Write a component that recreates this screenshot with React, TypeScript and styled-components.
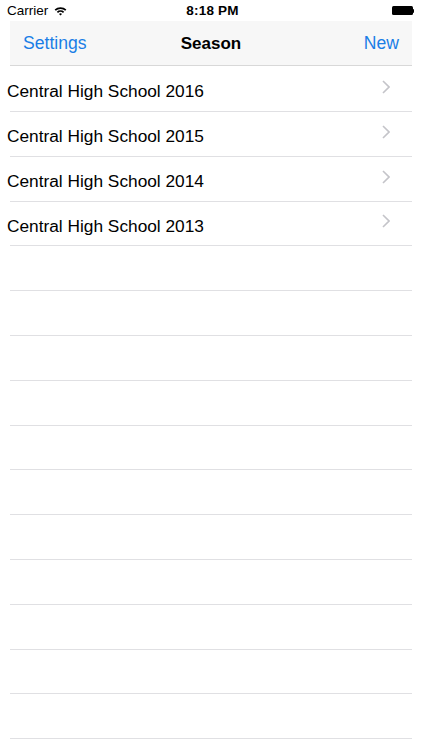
import React from "react";
import styled, { createGlobalStyle } from "styled-components";

const GlobalStyle = createGlobalStyle`
  html, body {
    margin: 0;
    padding: 0;
    background: #ffffff;
  }
  body {
    font-family: "Liberation Sans", Arial, sans-serif;
    -webkit-font-smoothing: antialiased;
  }
`;

const Screen = styled.div`
  width: 422px;
  height: 750px;
  overflow: hidden;
  background: #fff;
  display: flex;
  flex-direction: column;
  & > * {
    flex-shrink: 0;
  }
`;

const StatusBar = styled.div`
  height: 21px;
  display: grid;
  grid-template-columns: 1fr auto 1fr;
  align-items: center;
  padding: 0 8px 0 7px;
  font-size: 13.5px;
  color: #000;
`;

const Carrier = styled.div`
  display: flex;
  align-items: center;
  gap: 6px;
`;

const Clock = styled.div`
  font-weight: 700;
  letter-spacing: 0.2px;
  padding-left: 4px;
`;

const BatteryWrap = styled.div`
  justify-self: end;
  display: flex;
  align-items: center;
`;

const BatteryBody = styled.div`
  width: 21px;
  height: 9px;
  background: #000;
  border-radius: 1.5px;
`;

const BatteryTip = styled.div`
  width: 1.5px;
  height: 4px;
  background: #000;
  border-radius: 0 1px 1px 0;
`;

const NavBar = styled.div`
  margin: 0 10px;
  height: 43px;
  background: #f7f7f7;
  border-bottom: 1px solid #d8d8d8;
  display: grid;
  grid-template-columns: 1fr auto 1fr;
  align-items: center;
  padding: 1px 13px 0;
  font-size: 17px;
`;

const NavButton = styled.div<{ $align: "left" | "right" }>`
  color: #1a7ee6;
  font-size: 17.6px;
  justify-self: ${({ $align }) => ($align === "left" ? "start" : "end")};
`;

const Title = styled.div`
  font-weight: 700;
  color: #000;
`;

const List = styled.div`
  display: flex;
  flex-direction: column;
  & > * {
    flex-shrink: 0;
  }
`;

const Row = styled.div`
  box-sizing: border-box;
  height: 44.8px;
  margin-left: 10px;
  margin-right: 10px;
  border-bottom: 1px solid #e0e0e3;
  display: flex;
  align-items: center;
  justify-content: space-between;
  padding-right: 22px;
`;

const FirstRow = styled(Row)`
  height: 46px;
`;

const Label = styled.div`
  margin-left: -3px;
  margin-top: 6px;
  font-size: 17.3px;
  color: #000;
`;

const Chevron = styled.svg`
  width: 8px;
  height: 14px;
  margin-top: -4px;
`;

function Arrow() {
  return (
    <Chevron viewBox="0 0 8 14">
      <path d="M1 1 L7 7 L1 13" fill="none" stroke="#c4c4c9" strokeWidth="1.6" />
    </Chevron>
  );
}

function Wifi() {
  return (
    <svg width="13" height="10" viewBox="0 0 13 10">
      <path d="M0.6 3.6 A8.5 8.5 0 0 1 12.4 3.6 L11.2 4.8 A6.8 6.8 0 0 0 1.8 4.8 Z" fill="#000" />
      <path d="M2.8 5.8 A5.4 5.4 0 0 1 10.2 5.8 L9 7 A3.7 3.7 0 0 0 4 7 Z" fill="#000" />
      <path d="M5 8 A2.2 2.2 0 0 1 8 8 L6.5 9.6 Z" fill="#000" />
    </svg>
  );
}

const seasons = [
  "Central High School 2016",
  "Central High School 2015",
  "Central High School 2014",
  "Central High School 2013",
];

export default function App() {
  return (
    <Screen>
      <GlobalStyle />
      <StatusBar>
        <Carrier>
          Carrier
          <Wifi />
        </Carrier>
        <Clock>8:18 PM</Clock>
        <BatteryWrap>
          <BatteryBody />
          <BatteryTip />
        </BatteryWrap>
      </StatusBar>
      <NavBar>
        <NavButton $align="left">Settings</NavButton>
        <Title>Season</Title>
        <NavButton $align="right">New</NavButton>
      </NavBar>
      <List>
        {seasons.map((s, i) => {
          const R = i === 0 ? FirstRow : Row;
          return (
            <R key={s}>
              <Label>{s}</Label>
              <Arrow />
            </R>
          );
        })}
        {Array.from({ length: 12 }).map((_, i) => (
          <Row key={i} />
        ))}
      </List>
    </Screen>
  );
}
